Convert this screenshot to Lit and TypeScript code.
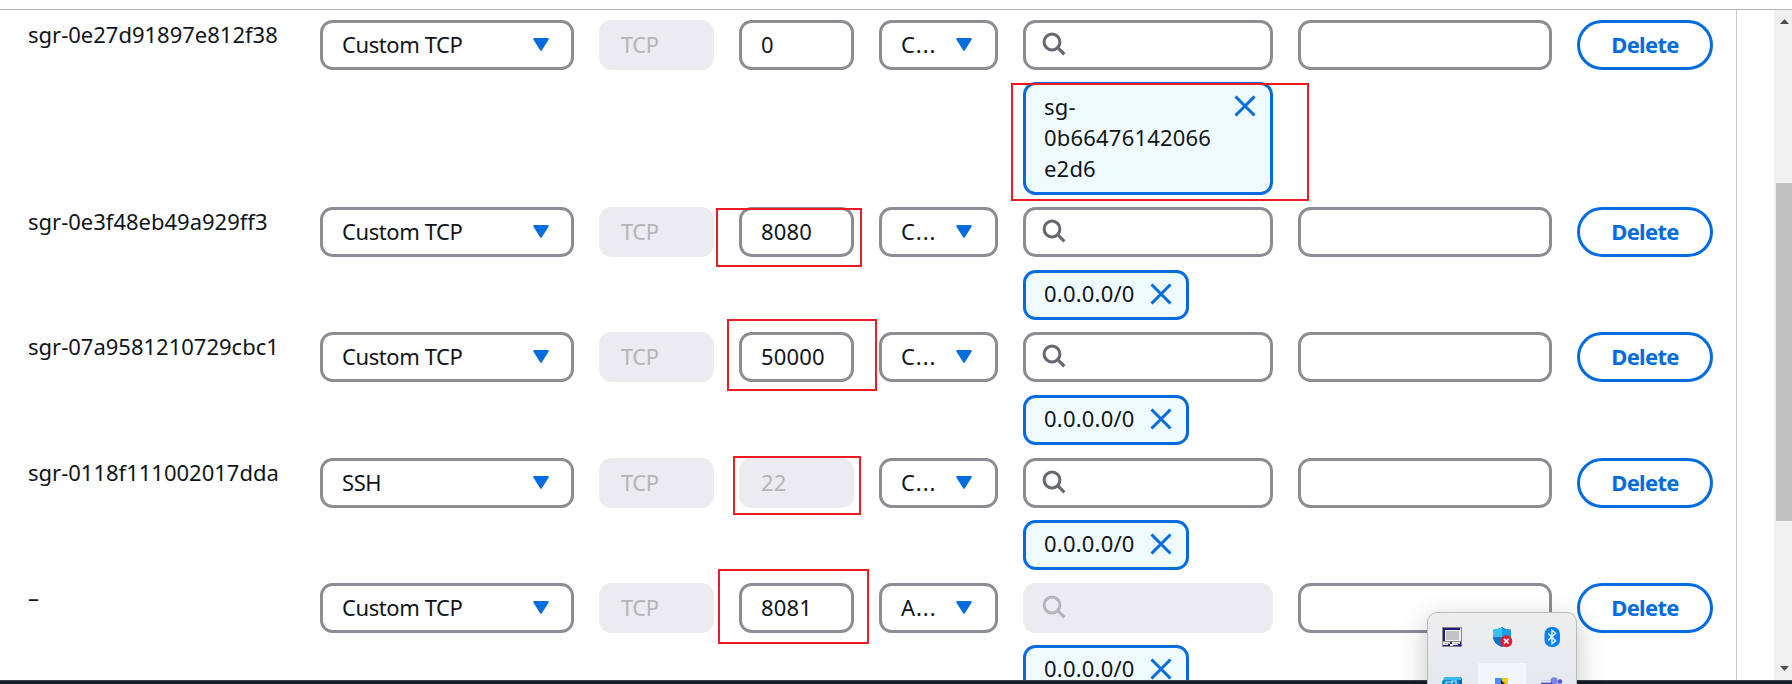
import { LitElement, html, css, svg } from "lit";
import { customElement } from "lit/decorators.js";
import { classMap } from "lit/directives/class-map.js";
import { styleMap } from "lit/directives/style-map.js";

interface Rule {
  id: string;
  type: string;
  port: string;
  portOff?: boolean;
  source: string;
  sourceOff?: boolean;
  token: string[];
  height: number;
  gap: number;
}

const RULES: Rule[] = [
  { id: "sgr-0e27d91897e812f38", type: "Custom TCP", port: "0", source: "C...", token: ["sg-", "0b66476142066", "e2d6"], height: 187, gap: 12 },
  { id: "sgr-0e3f48eb49a929ff3", type: "Custom TCP", port: "8080", source: "C...", token: ["0.0.0.0/0"], height: 125, gap: 13 },
  { id: "sgr-07a9581210729cbc1", type: "Custom TCP", port: "50000", source: "C...", token: ["0.0.0.0/0"], height: 126, gap: 13 },
  { id: "sgr-0118f111002017dda", type: "SSH", port: "22", portOff: true, source: "C...", token: ["0.0.0.0/0"], height: 125, gap: 12 },
  { id: "–", type: "Custom TCP", port: "8081", source: "A...", sourceOff: true, token: ["0.0.0.0/0"], height: 125, gap: 12 },
];

// Hand-drawn highlight frames laid over the table.
const MARKS = [
  { x: 1011, y: 83, w: 298, h: 118 },
  { x: 716, y: 208, w: 146, h: 59 },
  { x: 727, y: 319, w: 150, h: 72 },
  { x: 733, y: 456, w: 128, h: 59 },
  { x: 718, y: 569, w: 151, h: 75 },
];

const caret = html`<svg class="caret" width="16" height="13" viewBox="0 0 16 13"><path d="M1.2 1h13.6L8 11.8z" fill="#006ce0" stroke="#006ce0" stroke-width="2" stroke-linejoin="round"/></svg>`;
const lens = html`<svg class="lens" width="24" height="24" viewBox="0 0 24 24"><circle cx="10" cy="10" r="7.9" fill="none" stroke="currentColor" stroke-width="3"/><path d="M15.6 15.6l6.8 6.8" stroke="currentColor" stroke-width="3"/></svg>`;
const cross = html`<svg class="cross" width="22" height="22" viewBox="0 0 22 22"><path d="M1.5 1.5l19 19M20.5 1.5l-19 19" stroke="#006ce0" stroke-width="3"/></svg>`;

const TRAY = [
  svg`<path d="M0 0h20v20H0z" fill="#85858a"/><path d="M1 1h18v18H1z" fill="#f1f1f4"/><path d="M1 1h17v2H3v11H1z" fill="#1b1b80"/><path d="M4 4h13v9H4z" fill="#c2c2c4"/><path d="M1 14h18v1H1z" fill="#85858a"/><path d="M2 16h5v1H2zM12 16h5v1h-5z" fill="#b5b5c0"/><path d="M8 15h2v2H8v2H1v-1h5v-1h2zM18 15h1v4h-8v-1h5v-1h2z" fill="#1b1b80"/>`,
  svg`<path d="M10 0c2.400 1.800 5.600 2.700 9 2.800V9c0 5.500-4 9.200-9 11C5 18.200 1 14.500 1 9V2.800C4.400 2.700 7.600 1.800 10 0z" fill="#0f7fd2"/><path d="M10 0v10H1V2.800C4.400 2.700 7.600 1.800 10 0z" fill="#35c1f1"/><path d="M10 0c2.400 1.800 5.600 2.700 9 2.800V10h-9z" fill="#1b9de2"/><path d="M1 10h9v10C5.500 18.200 1.500 15 1 10z" fill="#0c74c9"/><circle cx="14.300" cy="14.200" r="6" fill="#d9202e"/><path d="M12 11.900l4.600 4.600M16.600 11.900L12 16.500" stroke="#fff" stroke-width="1.700"/>`,
  svg`<rect x="2.500" width="15.500" height="20" rx="7" fill="#0082fc"/><path d="M6.200 6.500l7.400 7.200L10 16.800V3.200l3.600 3.100-7.400 7.200" fill="none" stroke="#fff" stroke-width="1.300"/>`,
  svg`<rect x="2" width="18" height="20" rx="3" fill="#0a63a8"/><path d="M3.500 0h13.500q2 0 2.500 3L1 4q.5-4 2.500-4z" fill="#36bce8"/><rect y="3" width="17" height="16" rx="2" fill="#1287cb"/><path d="M4 7V5h6v2M10 6V4h4v3" stroke="#a7e9ff" stroke-width="1.200" fill="none"/>`,
  svg`<path d="M3 1h7v12H3z" fill="#4b8cf7"/><path d="M10 1h6v12h-6z" fill="#fdc50b"/><path d="M9 3l7 7H9z" fill="#111"/><path d="M10.300 6v4h3z" fill="#fff"/>`,
  svg`<circle cx="12" cy="4" r="3.700" fill="#7b83eb"/><circle cx="18" cy="4.500" r="2.200" fill="#5059c9"/><path d="M8 6.500h12v9H8z" fill="#7b83eb"/><rect x="-1" y="3.500" width="11" height="12" rx="1" fill="#4b53bc"/><path d="M-1 3.500h10v2h-10z" fill="#f4f4fb"/>`,
];

@customElement("app-root")
export class AppRoot extends LitElement {
  static styles = css`
    :host {
      display: block;
      position: relative;
      width: 1792px;
      height: 684px;
      overflow: hidden;
      background: #fff;
      color: #0f141a;
      font: 22px/31px "Noto Sans", sans-serif;
    }
    * { box-sizing: border-box; }
    svg { display: block; flex: none; overflow: visible; }
    .page { display: flex; flex-direction: column; height: 684px; }
    .head { flex: none; height: 10px; border-bottom: 1px solid #b4b4b6; }
    .body { flex: 1; min-height: 0; display: flex; overflow: hidden; }
    .panel { width: 1737px; border-right: 1px solid #c6c6cd; padding: 10px 0 0 28px; overflow: hidden; }
    .foot { flex: none; height: 4px; background: #161d26; border-top: 1px solid #3c424b; }
    .rule {
      display: grid;
      grid-template-columns: 267px 254px 115px 115px 119px 250px 254px 136px;
      column-gap: 25px;
      align-items: start;
    }
    .id { white-space: nowrap; margin-top: -1px; }
    .field {
      height: 50px;
      display: flex;
      align-items: center;
      border: 3px solid #8c8c94;
      border-radius: 12.5px;
      padding: 0 19px 2px;
      white-space: nowrap;
      letter-spacing: 0.15px;
    }
    .type, .pick { justify-content: space-between; }
    .type { padding-right: 22.5px; letter-spacing: -0.42px; }
    .pick { padding-right: 23.5px; letter-spacing: 0; }
    .dots { letter-spacing: 0.95px; }
    .seek { padding-left: 16px; color: #656871; }
    .off { background: #ebebf0; border-color: #ebebf0; color: #b4b4bb; }
    .proto { letter-spacing: -0.45px; }
    .token {
      display: flex;
      gap: 15px;
      width: fit-content;
      border: 3px solid #006ce0;
      border-radius: 12.5px;
      background: #f0fbff;
      padding: 5px 14px 8px 18px;
      letter-spacing: 0.2px;
    }
    .token .cross { margin-top: 5px; }
    .wide { width: 250px; justify-content: space-between; padding: 6px 14px 8px 18px; }
    .wide .cross { margin-top: 4px; }
    .delete {
      height: 50px;
      display: flex;
      align-items: center;
      justify-content: center;
      border: 3px solid #006ce0;
      border-radius: 25px;
      padding-bottom: 2px;
      color: #006ce0;
      font-weight: 700;
      letter-spacing: -0.7px;
    }
    .scroll { width: 18px; margin-left: 37px; background: #f0f0f0; display: flex; flex-direction: column; align-items: flex-end; }
    .arrow { width: 9px; height: 5px; margin: 9px 3px 0 0; background: #505050; clip-path: polygon(50% 0, 100% 100%, 0 100%); }
    .thumb { width: 16px; height: 338px; margin-top: 159px; background: #c1c1c1; }
    .down { margin-top: 145px; clip-path: polygon(0 0, 100% 0, 50% 100%); }
    .mark { position: absolute; border: 2px solid #ed1c24; }
    .tray {
      position: absolute;
      left: 1427px;
      top: 612px;
      width: 150px;
      height: 120px;
      border: 1px solid #b9b9bb;
      border-radius: 10px;
      background: linear-gradient(#eeeeee, #e6e9ee 60px);
      box-shadow: 0 8px 28px rgba(0, 0, 0, 0.24);
      display: grid;
      grid-template-columns: repeat(3, 48px);
      grid-template-rows: 50px 48px;
      column-gap: 2px;
    }
    .cell { display: grid; place-items: center; }
    .upper { padding-bottom: 2px; }
    .lit { background: #f4f5f8; }
  `;

  private row(r: Rule) {
    const wide = r.token.length > 1;
    return html`<div class="rule" style=${styleMap({ height: r.height + "px" })}>
      <div class="id">${r.id}</div>
      <div class="field type"><span>${r.type}</span>${caret}</div>
      <div class="field off proto"><span>TCP</span></div>
      <div class=${classMap({ field: true, off: !!r.portOff })}><span>${r.port}</span></div>
      <div class="field pick"><span class="dots">${r.source}</span>${caret}</div>
      <div class="source">
        <div class=${classMap({ field: true, seek: true, off: !!r.sourceOff })}>${lens}</div>
        <div class=${classMap({ token: true, wide })} style=${styleMap({ marginTop: r.gap + "px" })}>
          <div>${r.token.map((t) => html`<div>${t}</div>`)}</div>${cross}
        </div>
      </div>
      <div class="field"></div>
      <div class="delete">Delete</div>
    </div>`;
  }

  render() {
    return html`
      <div class="page">
        <div class="head"></div>
        <div class="body">
          <div class="panel">${RULES.map((r) => this.row(r))}</div>
          <div class="scroll"><div class="arrow"></div><div class="thumb"></div><div class="arrow down"></div></div>
        </div>
        <div class="foot"></div>
      </div>
      ${MARKS.map((m) => html`<div class="mark" style=${styleMap({ left: m.x + "px", top: m.y + "px", width: m.w + "px", height: m.h + "px" })}></div>`)}
      <div class="tray">
        ${TRAY.map((t, i) => html`<div class=${classMap({ cell: true, upper: i < 3, lit: i === 4 })}><svg width="20" height="20" viewBox="0 0 20 20">${t}</svg></div>`)}
      </div>
    `;
  }
}
